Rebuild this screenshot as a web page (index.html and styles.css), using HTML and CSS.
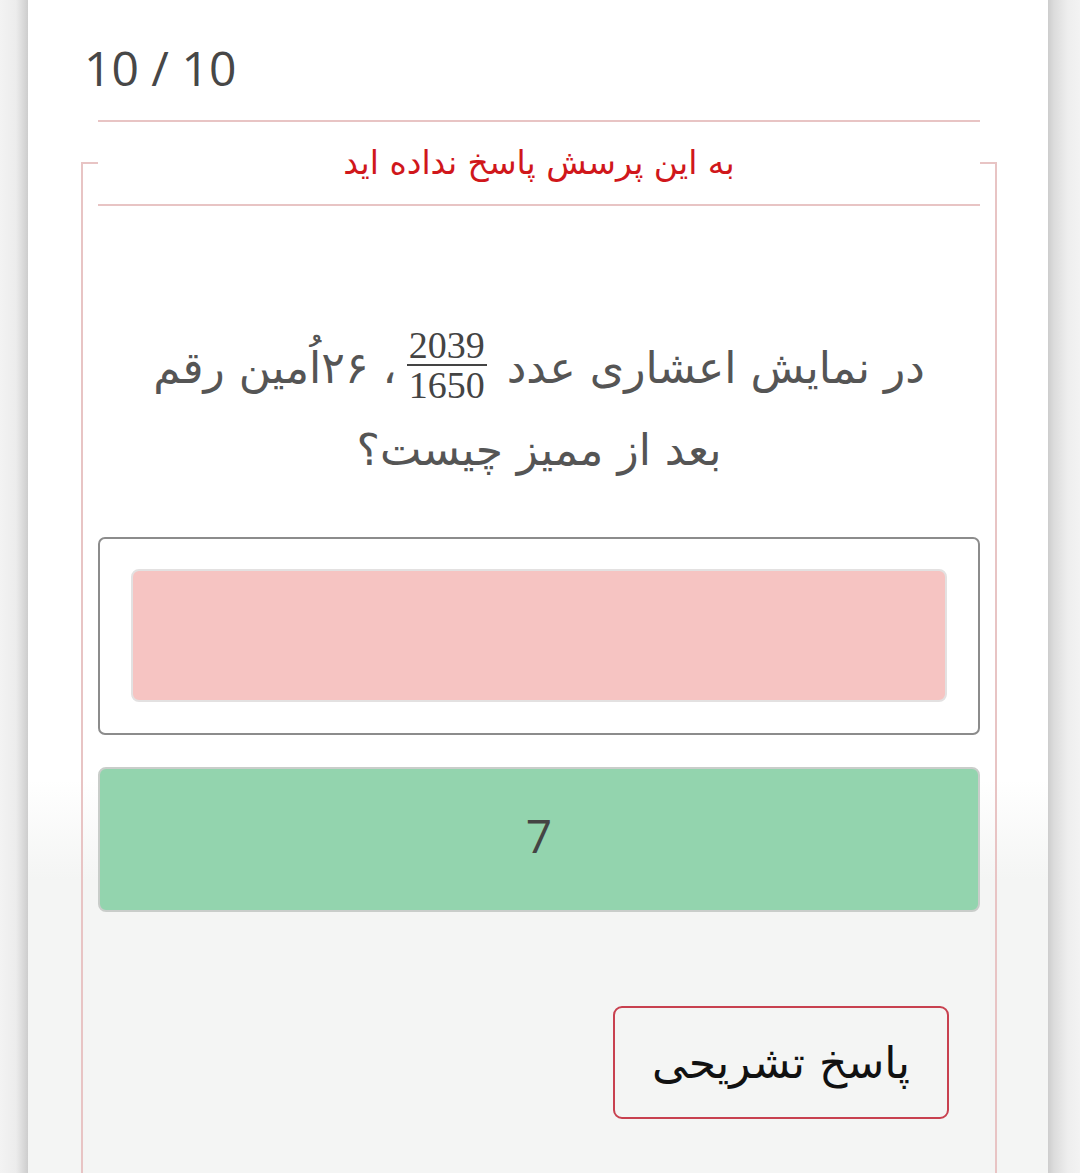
FILE: index.html
```html
<!DOCTYPE html>
<html lang="fa">
<head>
  <meta charset="UTF-8">
  <meta name="viewport" content="width=device-width, initial-scale=1.0">
  <title>آزمون</title>
  <link rel="stylesheet" href="styles.css">
</head>
<body>
  <div class="sheet">
    <div class="counter" dir="ltr">10 / 10</div>

    <fieldset class="question-box" dir="rtl">
      <legend class="status">به این پرسش پاسخ نداده اید</legend>

      <p class="question">
        در نمایش اعشاری عدد
        <span class="frac"><span class="num">2039</span><span class="den">1650</span></span>،
        ۲۶اُمین رقم<br>بعد از ممیز چیست؟
      </p>

      <div class="answer-wrap">
        <div class="answer wrong"></div>
      </div>

      <div class="answer correct">7</div>

      <button class="explain">پاسخ تشریحی</button>
    </fieldset>
  </div>
</body>
</html>
```

FILE: styles.css
```css
body {
  margin: 0;
  min-height: 100vh;
  background: linear-gradient(to right,
    #f3f3f3 0px, #ececec 16px, #cdcdcd 28px,
    #cdcdcd 1048px, #dcdcdc 1054px, #eeeeee 1068px, #f3f3f3 1080px);
  font-family: "DejaVu Sans", "Noto Sans", sans-serif;
}

.sheet {
  width: 1020px;
  min-height: 100vh;
  margin-left: 28px;
  padding: 38px 51px 0 53px;
  box-sizing: border-box;
  overflow: hidden;
  background: linear-gradient(to bottom, #ffffff 0px, #ffffff 780px, #f4f5f4 880px, #f4f5f4 100%);
}

.counter {
  margin-left: 3px;
  font-family: "Open Sans", sans-serif;
  font-size: 48px;
  line-height: 60px;
  color: #474747;
  text-align: left;
}

.question-box {
  margin: 22px 0 0 0;
  padding: 0 15px 200px;
  border: 2px solid #e8c4c4;
  border-bottom: none;
}

.status {
  width: 100%;
  box-sizing: border-box;
  padding: 0;
  border-top: 2px solid #e8c4c4;
  border-bottom: 2px solid #e8c4c4;
  line-height: 82px;
  font-size: 33px;
  color: #d0171b;
  text-align: center;
}

.question {
  margin: 0;
  padding-top: 122px;
  font-size: 44px;
  line-height: 80px;
  color: #555555;
  text-align: center;
}

.frac {
  display: inline-flex;
  flex-direction: column;
  align-items: center;
  vertical-align: middle;
  margin: 0 6px 0 10px;
  position: relative;
  top: -6px;
  font-family: "Liberation Serif", serif;
  font-size: 38px;
  line-height: 38px;
  color: #444444;
}

.num {
  padding: 0 2px;
  border-bottom: 2px solid #444444;
}

.answer-wrap {
  margin-top: 47px;
  padding: 30px 31px 31px;
  border: 2px solid #8c8c8c;
  border-radius: 7px;
}

.answer {
  box-sizing: border-box;
  border-radius: 8px;
}

.wrong {
  height: 133px;
  background: #f6c4c2;
  border: 2px solid #e3e1e1;
}

.correct {
  margin-top: 32px;
  height: 145px;
  padding-bottom: 10px;
  background: #93d4ae;
  border: 2px solid #c9cdca;
  font-family: "Open Sans", sans-serif;
  font-size: 46px;
  color: #444444;
  display: flex;
  align-items: center;
  justify-content: center;
}

.explain {
  display: block;
  margin: 94px 31px 0 0;
  padding-bottom: 2px;
  width: 336px;
  height: 113px;
  background: transparent;
  border: 2px solid #c8414f;
  border-radius: 9px;
  font-family: "DejaVu Sans", sans-serif;
  font-size: 44px;
  color: #111111;
  cursor: pointer;
}
```
